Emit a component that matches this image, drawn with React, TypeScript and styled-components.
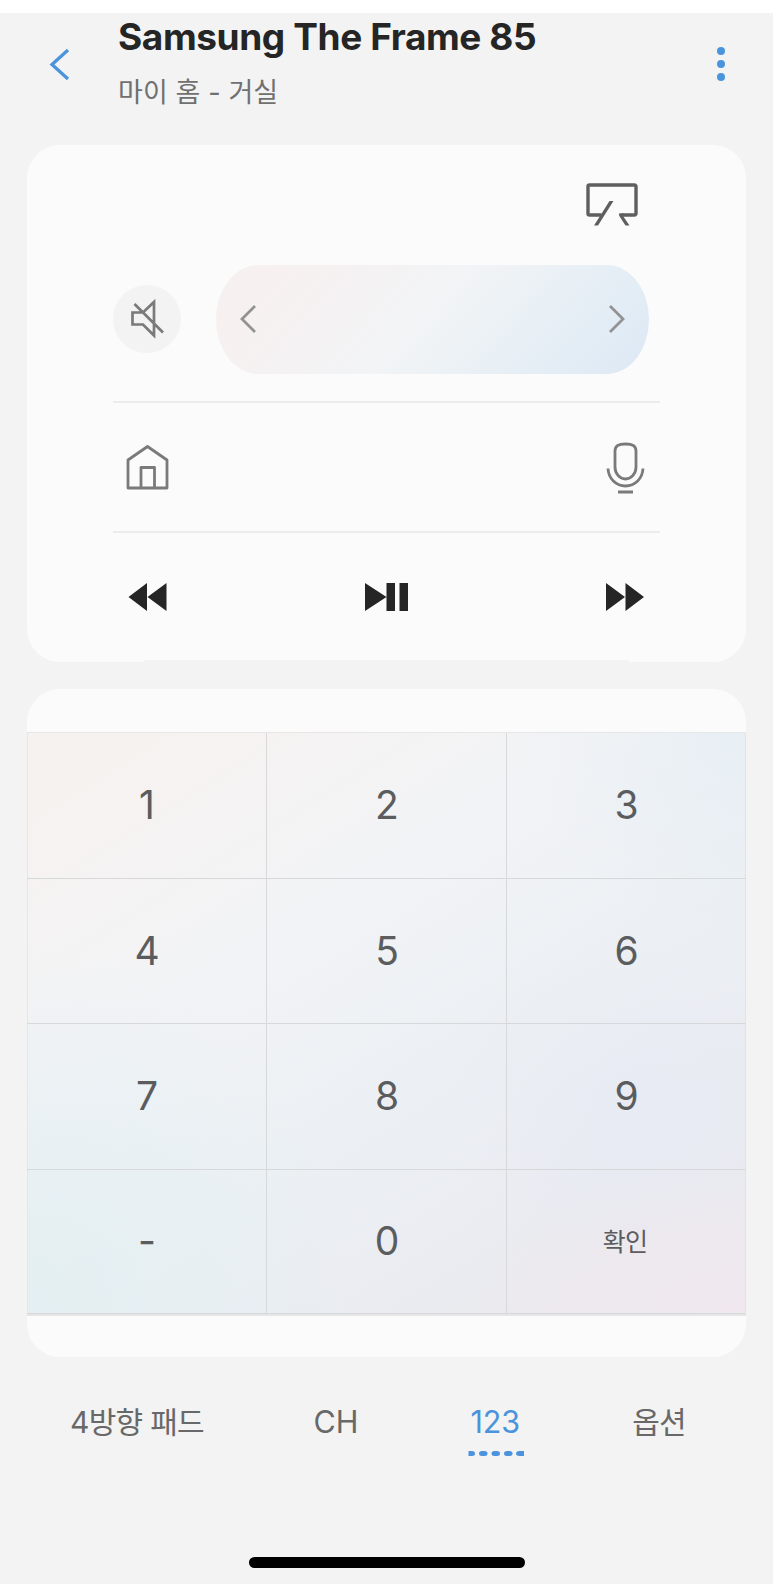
import React from 'react';
import styled, { createGlobalStyle } from 'styled-components';

const GlobalStyle = createGlobalStyle`
  * { box-sizing: border-box; }
  body { margin: 0; background: #fff; }
  button { border: 0; padding: 0; margin: 0; background: none; color: inherit; font: inherit; display: block; }
  svg { display: block; overflow: visible; }
`;

const Page = styled.div`
  width: 773px;
  height: 1584px;
  padding-top: 13px;
  font-family: Inter, 'Noto Sans CJK KR', sans-serif;
  color: #5b5b5b;
  background: linear-gradient(#fff 13px, #f3f3f3 13px);
`;

const Header = styled.header`
  display: flex;
  height: 132px;
  padding: 0 48.5px 0 49.5px;
`;

const HeaderButton = styled.button<{ $top: number }>`
  height: 36px;
  margin-top: ${(p) => p.$top}px;
`;

const Titles = styled.div`
  flex: 1;
  margin-left: 49.5px;
`;

const Title = styled.h1`
  margin: 2px 0 0;
  font-size: 37px;
  line-height: 44px;
  font-weight: 700;
  letter-spacing: -0.4px;
  color: #252525;
  white-space: nowrap;
`;

const Subtitle = styled.p`
  margin: 14px 0 0;
  font-size: 27px;
  line-height: 40px;
  font-weight: 400;
  letter-spacing: 0.1px;
  color: #707070;
`;

const Card = styled.section`
  margin: 0 27px;
  background: #fbfbfb;
  border-radius: 33px;
`;

const ControlCard = styled(Card)`
  display: flex;
  flex-direction: column;
  height: 517px;
  padding: 0 86px;
`;

const DisplayRow = styled.div`
  display: flex;
  justify-content: flex-end;
  height: 119.5px;
  padding: 38px 22px 0 0;
`;

const VolumeRow = styled.div`
  display: flex;
  align-items: center;
  justify-content: space-between;
  height: 109px;
  padding-right: 11px;
`;

const MuteButton = styled.button`
  display: grid;
  place-items: center;
  width: 68px;
  height: 68px;
  border-radius: 50%;
  background: #f3f3f3;
`;

const Slider = styled.div`
  display: flex;
  align-items: center;
  justify-content: space-between;
  width: 433px;
  height: 109px;
  padding: 0 24px 1px;
  border-radius: 42px / 54.5px;
  background: linear-gradient(132deg, #f7f0f0 12%, #f4f2f3 32%, #f2f4f6 48%, #e9f0f5 68%, #e3edf5 82%, #dfe9f5 96%);
`;

const Divider = styled.hr`
  width: 100%;
  height: 2px;
  margin: 0;
  border: 0;
  background: #ececec;
`;

const IconRow = styled.div<{ $height: number }>`
  display: flex;
  align-items: center;
  justify-content: space-between;
  height: ${(p) => p.$height}px;
  padding: 1px 16px 0 13px;
`;

const TransportRow = styled(IconRow)`
  padding: 3px 16px 0 15px;
`;

const CardFoot = styled.div`
  width: 485px;
  height: 2px;
  margin: auto 0 0 31px;
  background: #f3f3f3;
`;

const KeypadCard = styled(Card)`
  height: 668px;
  margin-top: 27px;
  padding-top: 43px;
`;

const Keypad = styled.div`
  display: grid;
  grid-template-columns: 240px 240px 239px;
  grid-template-rows: 146px 145px 146px 144px;
  border: solid #e6e6e7;
  border-width: 1px 0 2px;
  box-shadow: inset 1px 0 #e4e6e7, inset -1px 0 #e0e2e3;
  background:
    radial-gradient(ellipse 280px 150px at 100% 100%, rgba(240, 232, 238, 1), rgba(240, 232, 238, 0)),
    radial-gradient(ellipse 200px 170px at 87% 66%, rgba(230, 234, 244, 0.7), rgba(230, 234, 244, 0)),
    radial-gradient(ellipse 330px 370px at 0% 100%, rgba(227, 239, 242, 1), rgba(232, 241, 245, 0)),
    radial-gradient(ellipse 220px 200px at 100% 0%, rgba(230, 238, 244, 0.8), rgba(230, 239, 244, 0)),
    linear-gradient(148deg, #f6f2f0 8%, #f4f3f4 24%, #f1f3f6 38%, #ecf0f4 56%, #eaecf1 76%, #eae9ee 90%);
`;

const Key = styled.button<{ $small?: boolean }>`
  display: flex;
  align-items: center;
  justify-content: center;
  padding: ${(p) => (p.$small ? '0 2px 4px 0' : '0 0 2px 1px')};
  border: solid #d6d8d9;
  border-width: 0 1px 1px 0;
  font-size: ${(p) => (p.$small ? 25 : 39)}px;
  letter-spacing: ${(p) => (p.$small ? '-0.7px' : 0)};
  color: #5b5c5d;
  &:nth-child(3n) { border-right-color: transparent; }
`;

const Tabs = styled.nav`
  display: flex;
  height: 100px;
  padding: 44.5px 87px 0 70px;
  justify-content: space-between;
`;

const Tab = styled.button<{ $latin?: boolean; $active?: boolean }>`
  display: flex;
  flex-direction: column;
  align-items: center;
  gap: 9px;
  height: 54px;
  font-size: ${(p) => (p.$latin ? 30.5 : 30)}px;
  line-height: 40px;
  font-weight: 400;
  letter-spacing: ${(p) => (p.$latin ? '-0.1px' : '-0.7px')};
  color: ${(p) => (p.$active ? '#4b93dd' : '#686868')};
  white-space: nowrap;
`;

const HomeIndicator = styled.div`
  width: 276px;
  height: 10.5px;
  margin: 100px auto 0;
  border-radius: 6px;
  background: #000;
`;

const Chevron = ({ flip, color = '#929294', w = 16, h = 28, stroke = 2.8 }: { flip?: boolean; color?: string; w?: number; h?: number; stroke?: number }) => (
  <svg width={w} height={h} viewBox={`0 0 ${w} ${h}`} fill="none" stroke={color} strokeWidth={stroke}>
    <path d={flip ? `M1 1 L${w - 2} ${h / 2} L1 ${h - 1}` : `M${w - 1} 1 L2 ${h / 2} L${w - 1} ${h - 1}`} />
  </svg>
);

const MoreIcon = () => (
  <svg width="8" height="36" fill="#4b93dd">
    <circle cx="4" cy="4" r="4" />
    <circle cx="4" cy="17" r="4" />
    <circle cx="4" cy="30" r="4" />
  </svg>
);

const ScreenIcon = () => (
  <svg width="52" height="43" fill="none" stroke="#5f5f5f" strokeWidth="3.4">
    <path d="M15.500 32H3.500a1.500 1.500 0 0 1-1.500-1.500V3.500a1.500 1.500 0 0 1 1.500-1.500h45a1.500 1.500 0 0 1 1.500 1.500V30.500a1.500 1.500 0 0 1-1.500 1.500H36" />
    <path fill="#5f5f5f" stroke="none" d="M23.500 18H27.500L12 42.500H8Z M33.500 30.300H37.500V33.700L43.500 42.500H39.500L33.300 33Q32.500 31 33.500 30.300Z" />
  </svg>
);

const MuteIcon = () => (
  <svg width="34" height="38" fill="none" stroke="#7a7a7a" strokeWidth="2.7">
    <path d="M2.500 12.500H13L24 2V35.500L13 24.500H2.500Z M4.500 4L33 32.500" />
  </svg>
);

const HomeIcon = () => (
  <svg width="43" height="46" fill="none" stroke="#7a7a7a" strokeWidth="2.8" strokeLinejoin="round">
    <path d="M2 44V16L21.500 2.500L41 16V44Z M15 43.500V23.500H28.500V43.500" />
  </svg>
);

const MicIcon = () => (
  <svg width="38" height="51" fill="none" stroke="#7a7a7a" strokeWidth="2.8">
    <path d="M9 9C9 3.500 12.500 2 19.500 2S30 3.500 30 9V25C30 31.500 25.500 37 19.500 37S9 31.500 9 25Z M2 26.500C2.500 36.500 10 44 19.500 44S36.500 36.500 37 26.500 M12 50H27" />
  </svg>
);

const RewindIcon = () => (
  <svg width="39" height="28" fill="#252525"><path d="M0.500 14L19 0V28Z M19.500 14L38.500 0V28Z" /></svg>
);

const ForwardIcon = () => (
  <svg width="38" height="28" fill="#252525"><path d="M0 0L19 14L0 28Z M19.500 0L38 14L19.500 28Z" /></svg>
);

const PlayPauseIcon = () => (
  <svg width="43" height="28" fill="#252525"><path d="M0 0L21.500 14L0 28Z M21.500 0H30V28H21.500Z M34.500 0H43V28H34.500Z" /></svg>
);

const DashedUnderline = () => (
  <svg width="55" height="5" fill="#4b93dd">
    <path d="M0.500 0H4Q7 0 7 2.500T4 5H0.500Z" />
    <rect x="11" width="8.500" height="5" rx="3" />
    <rect x="23.500" width="8.500" height="5" rx="3" />
    <rect x="36" width="8.500" height="5" rx="3" />
    <path d="M56 0H51.500Q48 0 48 2.500T51.500 5H56Z" />
  </svg>
);

const keys = ['1', '2', '3', '4', '5', '6', '7', '8', '9', '-', '0', '확인'];
const tabs = [
  { label: '4방향 패드' },
  { label: 'CH', latin: true },
  { label: '123', latin: true, active: true },
  { label: '옵션' },
];

export default function App() {
  return (
    <Page>
      <GlobalStyle />
      <Header>
        <HeaderButton $top={33.5} aria-label="뒤로">
          <Chevron color="#4b93dd" w={19} h={31} stroke={3.3} />
        </HeaderButton>
        <Titles>
          <Title>Samsung The Frame 85</Title>
          <Subtitle>마이 홈 - 거실</Subtitle>
        </Titles>
        <HeaderButton $top={34} aria-label="더보기"><MoreIcon /></HeaderButton>
      </Header>
      <ControlCard>
        <DisplayRow><ScreenIcon /></DisplayRow>
        <VolumeRow>
          <MuteButton aria-label="음소거"><MuteIcon /></MuteButton>
          <Slider><Chevron /><Chevron flip /></Slider>
        </VolumeRow>
        <IconRow $height={27} />
        <Divider />
        <IconRow $height={128}><HomeIcon /><MicIcon /></IconRow>
        <Divider />
        <TransportRow $height={126}><RewindIcon /><PlayPauseIcon /><ForwardIcon /></TransportRow>
        <CardFoot />
      </ControlCard>
      <KeypadCard>
        <Keypad>
          {keys.map((k) => <Key key={k} $small={k === '확인'}>{k}</Key>)}
        </Keypad>
      </KeypadCard>
      <Tabs>
        {tabs.map((t) => (
          <Tab key={t.label} $latin={t.latin} $active={t.active}>
            {t.label}
            {t.active && <DashedUnderline />}
          </Tab>
        ))}
      </Tabs>
      <HomeIndicator />
    </Page>
  );
}
